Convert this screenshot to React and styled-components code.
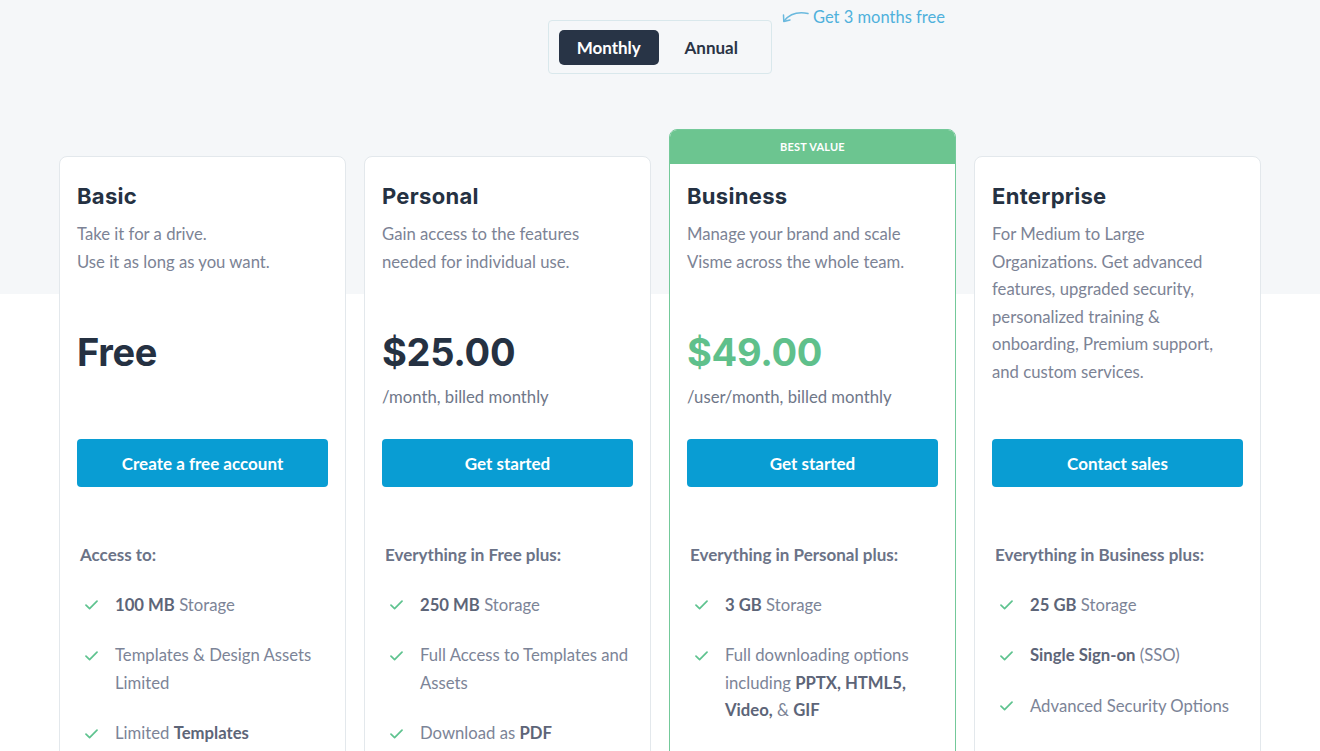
import React from "react";
import styled, { createGlobalStyle } from "styled-components";

const Global = createGlobalStyle`
  html, body { margin: 0; padding: 0; }
  body {
    font-family: Lato, "Open Sans", sans-serif;
    background: #ffffff;
    overflow: hidden;
  }
  * { box-sizing: border-box; }
`;

const Page = styled.div`
  min-height: 751px;
  background: linear-gradient(#f5f7f9 0, #f5f7f9 294px, #ffffff 294px);
  display: flex;
  flex-direction: column;
  align-items: center;
  padding-top: 20px;
`;

const ToggleWrap = styled.div`
  position: relative;
`;

const Toggle = styled.div`
  display: flex;
  gap: 3px;
  padding: 9px 10px;
  border: 1px solid #d9e8ec;
  border-radius: 4px;
  width: 224px;
  height: 54px;
`;

const ToggleBtn = styled.button`
  border: none;
  height: 35px;
  width: 101px;
  border-radius: 5px;
  font-family: Lato, sans-serif;
  font-weight: 700;
  font-size: 17px;
  cursor: pointer;
  background: ${(p) => (p.$active ? "#283446" : "transparent")};
  color: ${(p) => (p.$active ? "#ffffff" : "#2a3445")};
`;

const Promo = styled.div`
  position: absolute;
  left: 233px;
  top: -13px;
  display: flex;
  align-items: center;
  gap: 4px;
  white-space: nowrap;
  color: #4fb1dc;
  font-size: 16.5px;
  font-family: Lato, sans-serif;
`;

const Cards = styled.div`
  display: grid;
  grid-template-columns: repeat(4, 287px);
  gap: 18px;
  margin-top: 55px;
  align-items: start;
`;

const Card = styled.div`
  margin-top: ${(p) => (p.$featured ? "0" : "27px")};
  background: #ffffff;
  border: 1px solid ${(p) => (p.$featured ? "#74c99a" : "#e3e8ec")};
  border-radius: 8px;
  overflow: hidden;
  min-height: 640px;
`;

const Badge = styled.div`
  height: 35px;
  background: #6cc590;
  color: #ffffff;
  font-family: Lato, sans-serif;
  font-weight: 700;
  font-size: 11px;
  letter-spacing: 0.2px;
  display: flex;
  align-items: center;
  justify-content: center;
  margin: -1px -1px 0;
`;

const Body = styled.div`
  padding: ${(p) => (p.$featured ? "18px" : "25px")} 17px 0;
`;

const Top = styled.div`
  height: 257px;
  display: flex;
  flex-direction: column;
`;

const Title = styled.h2`
  margin: 0;
  font-family: Inter, "Open Sans", sans-serif;
  font-weight: 700;
  font-size: 22px;
  line-height: 28px;
  color: #253142;
  letter-spacing: 0.3px;
`;

const Desc = styled.p`
  margin: 11px 0 0;
  max-width: 232px;
  min-height: 90px;
  font-size: 16.7px;
  line-height: 27.5px;
  color: #7c8395;
`;

const Price = styled.div`
  margin-top: 17px;
  font-family: Inter, "Open Sans", sans-serif;
  font-weight: 700;
  font-size: 38px;
  line-height: 48px;
  color: ${(p) => (p.$accent ? "#5fc08b" : "#253142")};
  letter-spacing: -0.3px;
`;

const Billing = styled.div`
  margin-top: 8px;
  font-size: 16.7px;
  line-height: 27.5px;
  color: #6f7789;
`;

const CTA = styled.button`
  display: block;
  width: 100%;
  height: 48px;
  border: none;
  border-radius: 4px;
  background: #099dd3;
  color: #ffffff;
  font-family: Lato, sans-serif;
  font-weight: 700;
  font-size: 17px;
  cursor: pointer;
`;

const Features = styled.div`
  padding: 54px 0 0 3px;
`;

const FeatLabel = styled.div`
  font-weight: 700;
  font-size: 17px;
  line-height: 27.5px;
  color: #6b7387;
`;

const List = styled.ul`
  list-style: none;
  margin: 23px 0 0;
  padding: 0 0 0 5px;
  display: flex;
  flex-direction: column;
  gap: 23px;
`;

const Item = styled.li`
  display: flex;
  gap: 17px;
  font-size: 16.7px;
  line-height: 27.5px;
  color: #7c8497;
  b { color: #5d6578; font-weight: 700; }
`;

const CheckBox = styled.span`
  flex: none;
  width: 13px;
  height: 27.5px;
  display: flex;
  align-items: center;
`;

const Check = () => (
  <CheckBox>
    <svg width="13" height="10" viewBox="0 0 13 10" fill="none">
      <path d="M1 5.2 L4.6 8.6 L12 1.2" stroke="#5ec38f" strokeWidth="1.7" strokeLinecap="round" strokeLinejoin="round" />
    </svg>
  </CheckBox>
);

const Arrow = () => (
  <svg width="28" height="14" viewBox="0 0 28 14" fill="none">
    <path d="M27 3.5 C 17 1.5, 9 3.5, 3 11" stroke="#6ab9de" strokeWidth="1.5" strokeLinecap="round" />
    <path d="M2.5 5 L2.8 11.5 L9 10" stroke="#6ab9de" strokeWidth="1.5" strokeLinecap="round" strokeLinejoin="round" />
  </svg>
);

const plans = [
  {
    name: "Basic",
    desc: ["Take it for a drive.", <br key="b" />, "Use it as long as you want."],
    price: "Free",
    cta: "Create a free account",
    label: "Access to:",
    items: [
      <><b>100 MB</b> Storage</>,
      <>Templates &amp; Design Assets Limited</>,
      <>Limited <b>Templates</b></>,
    ],
  },
  {
    name: "Personal",
    desc: ["Gain access to the features needed for individual use."],
    price: "$25.00",
    billing: "/month, billed monthly",
    cta: "Get started",
    label: "Everything in Free plus:",
    items: [
      <><b>250 MB</b> Storage</>,
      <>Full Access to Templates and Assets</>,
      <>Download as <b>PDF</b></>,
    ],
  },
  {
    name: "Business",
    featured: true,
    desc: ["Manage your brand and scale Visme across the whole team."],
    price: "$49.00",
    billing: "/user/month, billed monthly",
    cta: "Get started",
    label: "Everything in Personal plus:",
    items: [
      <><b>3 GB</b> Storage</>,
      <>Full downloading options including <b>PPTX, HTML5, Video,</b> &amp; <b>GIF</b></>,
    ],
  },
  {
    name: "Enterprise",
    desc: ["For Medium to Large Organizations. Get advanced features, upgraded security, personalized training & onboarding, Premium support, and custom services."],
    cta: "Contact sales",
    label: "Everything in Business plus:",
    items: [
      <><b>25 GB</b> Storage</>,
      <><b>Single Sign-on</b> (SSO)</>,
      <>Advanced Security Options</>,
    ],
  },
];

export default function App() {
  return (
    <>
      <Global />
      <Page>
        <ToggleWrap>
          <Toggle>
            <ToggleBtn $active>Monthly</ToggleBtn>
            <ToggleBtn>Annual</ToggleBtn>
          </Toggle>
          <Promo>
            <Arrow />
            <span>Get 3 months free</span>
          </Promo>
        </ToggleWrap>
        <Cards>
          {plans.map((p) => (
            <Card key={p.name} $featured={p.featured}>
              {p.featured && <Badge>BEST VALUE</Badge>}
              <Body $featured={p.featured}>
                <Top>
                  <Title>{p.name}</Title>
                  <Desc>{p.desc}</Desc>
                  {p.price && <Price $accent={p.featured}>{p.price}</Price>}
                  {p.billing && <Billing>{p.billing}</Billing>}
                </Top>
                <CTA>{p.cta}</CTA>
                <Features>
                  <FeatLabel>{p.label}</FeatLabel>
                  <List>
                    {p.items.map((it, i) => (
                      <Item key={i}>
                        <Check />
                        <span>{it}</span>
                      </Item>
                    ))}
                  </List>
                </Features>
              </Body>
            </Card>
          ))}
        </Cards>
      </Page>
    </>
  );
}
